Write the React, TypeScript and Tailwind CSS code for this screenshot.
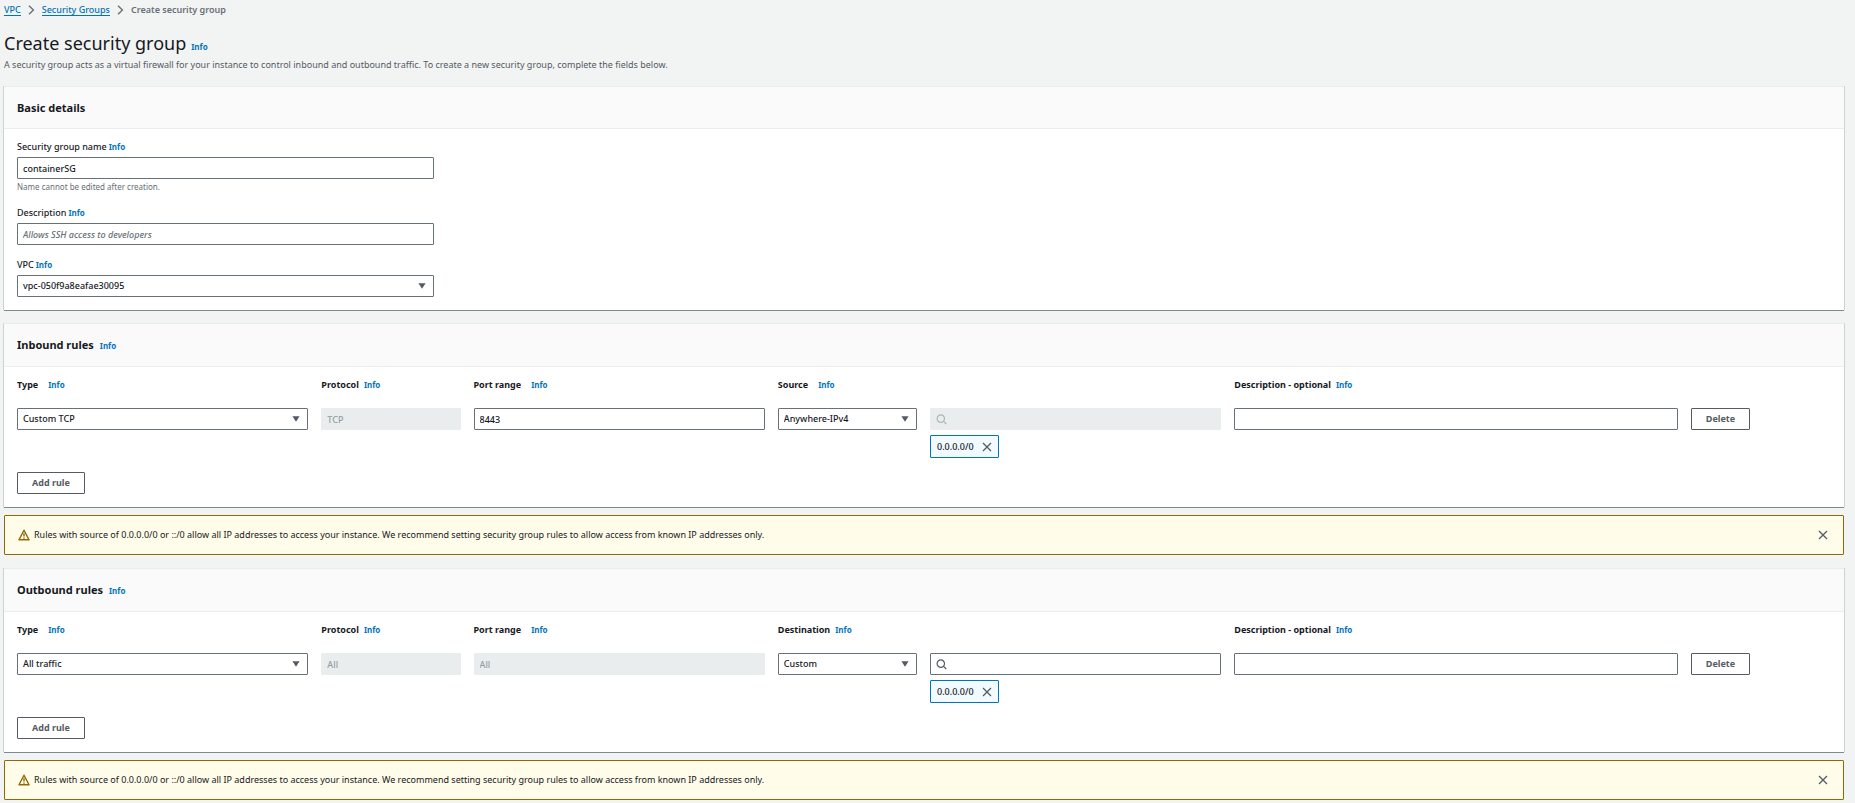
import React from "react";

function Info({ className = "" }: { className?: string }) {
  return (
    <a href="#info" className={`text-[8px] leading-3 font-bold text-[#0073bb] ${className}`}>
      Info
    </a>
  );
}

function CloseIcon() {
  return (
    <svg width="10" height="10" viewBox="0 0 10 10" fill="none" stroke="#545b64" strokeWidth="1.3" aria-hidden="true">
      <path d="M1 1l8 8M9 1l-8 8" />
    </svg>
  );
}

function ChevronIcon() {
  return (
    <svg width="7" height="10" viewBox="0 0 7 10" fill="none" stroke="#687078" strokeWidth="1.4" aria-hidden="true">
      <path d="M1 0.8L5.4 5L1 9.2" />
    </svg>
  );
}

function SearchIcon({ color }: { color: string }) {
  return (
    <svg width="11" height="11" viewBox="0 0 11 11" fill="none" stroke={color} strokeWidth="1.2" aria-hidden="true">
      <circle cx="4.8" cy="4.6" r="3.7" />
      <path d="M7.4 7.2L10.2 10" />
    </svg>
  );
}

function WarningIcon() {
  return (
    <svg width="12" height="12" viewBox="0 0 12 12" fill="none" stroke="#906806" strokeWidth="1.4" aria-hidden="true">
      <path d="M6 1.2L11 10.8H1Z" strokeLinejoin="round" />
      <path d="M6 4.2V7.6M6 8.4V9.8" />
    </svg>
  );
}

const boxClass =
  "block h-[22px] w-full rounded-[1px] border border-[#687078] bg-white px-[5px] text-[9px] leading-3 font-medium text-[#16191f] placeholder:italic placeholder:text-[#687078] disabled:border-[#eaeded] disabled:bg-[#e9eded] disabled:text-[#95a0a2] outline-none focus:border-[#00a1c9]";

function TextBox(props: React.InputHTMLAttributes<HTMLInputElement>) {
  return <input type="text" {...props} className={boxClass} />;
}

function SelectBox({ options, ...props }: { options: string[] } & React.SelectHTMLAttributes<HTMLSelectElement>) {
  return (
    <div className="relative">
      <select {...props} className={`${boxClass} appearance-none pr-6`}>
        {options.map((o) => (
          <option key={o}>{o}</option>
        ))}
      </select>
      <svg
        className="pointer-events-none absolute top-2 right-2"
        width="8"
        height="6"
        viewBox="0 0 8 6"
        fill="#545b64"
        aria-hidden="true"
      >
        <path d="M0.4 0.3H7.6L4 5.8Z" />
      </svg>
    </div>
  );
}

function SearchBox({ disabled, label }: { disabled?: boolean; label: string }) {
  return (
    <div className="relative">
      <input type="search" aria-label={label} disabled={disabled} className={`${boxClass} pl-5`} />
      <span className="pointer-events-none absolute top-[6px] left-[6px]">
        <SearchIcon color={disabled ? "#aab7b8" : "#545b64"} />
      </span>
    </div>
  );
}

function OutlineButton({ children }: { children: React.ReactNode }) {
  return (
    <button
      type="button"
      className="h-[22px] rounded-[1px] border border-[#545b64] bg-white px-[14px] text-[9px] leading-3 font-bold whitespace-nowrap text-[#545b64]"
    >
      {children}
    </button>
  );
}

function Panel({ title, info, children }: { title: string; info?: boolean; children: React.ReactNode }) {
  return (
    <section className="border-t border-[#eaeded] bg-white shadow-[0_1px_0_0_#7b8a8c,1px_0_0_0_#cdd2d2,-1px_0_0_0_#cdd2d2]">
      <header
        className={`flex items-center gap-[6px] border-b border-[#eaeded] bg-[#fafafa] px-[13px] ${info ? "h-[43px]" : "h-[42px]"}`}
      >
        <h2 className="text-[11px] leading-4 font-bold text-[#16191f]">{title}</h2>
        {info && <Info className="pt-[2px]" />}
      </header>
      {children}
    </section>
  );
}

function Field({
  id,
  label,
  hint,
  children,
}: {
  id: string;
  label: string;
  hint?: string;
  children: React.ReactNode;
}) {
  return (
    <div>
      <div className="mb-1 flex h-3 items-center gap-[2px]">
        <label htmlFor={id} className="text-[9px] leading-3 font-medium text-[#16191f]">
          {label}
        </label>
        <Info />
      </div>
      {children}
      {hint && <p className="mt-[2px] text-[8px] leading-3 text-[#687078]">{hint}</p>}
    </div>
  );
}

function ColumnLabel({
  id,
  label,
  wide,
  className,
}: {
  id: string;
  label: string;
  wide?: boolean;
  className: string;
}) {
  return (
    <div className={`flex h-3 items-center ${wide ? "gap-[10px]" : "gap-[5px]"} ${className}`}>
      <label htmlFor={id} className="text-[9px] leading-3 font-bold whitespace-nowrap text-[#16191f]">
        {label}
      </label>
      <Info />
    </div>
  );
}

type Rule = {
  id: string;
  title: string;
  type: string;
  protocol: string;
  port: string;
  portLocked?: boolean;
  peerLabel: string;
  peer: string;
  searchLocked?: boolean;
};

function RulesPanel({ rule }: { rule: Rule }) {
  const { id } = rule;
  return (
    <Panel title={rule.title} info>
      <div className="pt-3 pr-[14px] pb-[13px] pl-[13px]">
        <div className="grid grid-cols-12 gap-x-[13px]">
          <ColumnLabel id={`${id}-type`} label="Type" wide className="col-span-2" />
          <ColumnLabel id={`${id}-protocol`} label="Protocol" className="col-span-1" />
          <ColumnLabel id={`${id}-port`} label="Port range" wide className="col-span-2" />
          <ColumnLabel
            id={`${id}-peer`}
            label={rule.peerLabel}
            wide={rule.peerLabel === "Source"}
            className="col-span-3"
          />
          <ColumnLabel id={`${id}-description`} label="Description - optional" className="col-span-4" />
        </div>
        <div className="mt-[17px] grid grid-cols-12 items-start gap-x-[13px]">
          <div className="col-span-2">
            <SelectBox id={`${id}-type`} options={[rule.type]} />
          </div>
          <div className="col-span-1">
            <TextBox id={`${id}-protocol`} defaultValue={rule.protocol} disabled />
          </div>
          <div className="col-span-2">
            <TextBox id={`${id}-port`} defaultValue={rule.port} disabled={rule.portLocked} />
          </div>
          <div className="col-span-1">
            <SelectBox id={`${id}-peer`} options={[rule.peer]} />
          </div>
          <div className="col-span-2">
            <SearchBox label={`${rule.peerLabel} search`} disabled={rule.searchLocked} />
            <div className="mt-[5px] inline-flex h-[23px] items-center gap-2 rounded-[1px] border border-[#0073bb] bg-[#f1faff] px-[6px] align-top text-[9px] leading-3 font-medium text-[#16191f]">
              0.0.0.0/0
              <button type="button" aria-label="Remove 0.0.0.0/0">
                <CloseIcon />
              </button>
            </div>
          </div>
          <div className="col-span-3">
            <TextBox id={`${id}-description`} />
          </div>
          <div className="col-span-1 flex">
            <OutlineButton>Delete</OutlineButton>
          </div>
        </div>
        <div className="mt-[14px] flex">
          <OutlineButton>Add rule</OutlineButton>
        </div>
      </div>
    </Panel>
  );
}

function Warning() {
  return (
    <div
      role="alert"
      className="mt-2 flex h-10 items-center rounded-[1px] border border-[#906806] bg-[#fffce9] pr-[15px] pl-[13px]"
    >
      <WarningIcon />
      <p className="ml-1 flex-1 text-[9px] leading-3 text-[#16191f]">
        Rules with source of 0.0.0.0/0 or ::/0 allow all IP addresses to access your instance. We recommend setting
        security group rules to allow access from known IP addresses only.
      </p>
      <button type="button" aria-label="Dismiss">
        <CloseIcon />
      </button>
    </div>
  );
}

const inbound: Rule = {
  id: "inbound",
  title: "Inbound rules",
  type: "Custom TCP",
  protocol: "TCP",
  port: "8443",
  peerLabel: "Source",
  peer: "Anywhere-IPv4",
  searchLocked: true,
};

const outbound: Rule = {
  id: "outbound",
  title: "Outbound rules",
  type: "All traffic",
  protocol: "All",
  port: "All",
  portLocked: true,
  peerLabel: "Destination",
  peer: "Custom",
};

export default function App() {
  return (
    <div className="min-h-screen bg-[#f2f3f3] pt-1 pr-[11px] pb-[3px] pl-1 font-['Noto_Sans',sans-serif]">
      <nav aria-label="Breadcrumb" className="flex h-3 items-center gap-[7px] text-[9px] leading-3">
        <a href="#vpc" className="border-b border-[#0073bb] leading-[11px] font-medium text-[#0073bb]">
          VPC
        </a>
        <ChevronIcon />
        <a href="#groups" className="border-b border-[#0073bb] leading-[11px] font-medium text-[#0073bb]">
          Security Groups
        </a>
        <ChevronIcon />
        <span className="font-semibold text-[#687078]">Create security group</span>
      </nav>

      <header className="mt-[15px] mb-[15px]">
        <div className="flex items-baseline gap-[5px]">
          <h1 className="text-[18px] leading-6 text-[#16191f]">Create security group</h1>
          <Info />
        </div>
        <p className="mt-1 text-[9px] leading-3 text-[#545b64]">
          A security group acts as a virtual firewall for your instance to control inbound and outbound traffic. To
          create a new security group, complete the fields below.
        </p>
      </header>

      <main>
        <Panel title="Basic details">
          <div className="flex w-[443px] max-w-full flex-col gap-[14px] px-[13px] pt-3 pb-[13px]">
            <Field id="name" label="Security group name" hint="Name cannot be edited after creation.">
              <TextBox id="name" defaultValue="containerSG" />
            </Field>
            <Field id="description" label="Description">
              <TextBox id="description" placeholder="Allows SSH access to developers" />
            </Field>
            <Field id="vpc" label="VPC">
              <SelectBox id="vpc" options={["vpc-050f9a8eafae30095"]} />
            </Field>
          </div>
        </Panel>

        <div className="mt-[13px]">
          <RulesPanel rule={inbound} />
          <Warning />
        </div>
        <div className="mt-[13px]">
          <RulesPanel rule={outbound} />
          <Warning />
        </div>
      </main>
    </div>
  );
}
